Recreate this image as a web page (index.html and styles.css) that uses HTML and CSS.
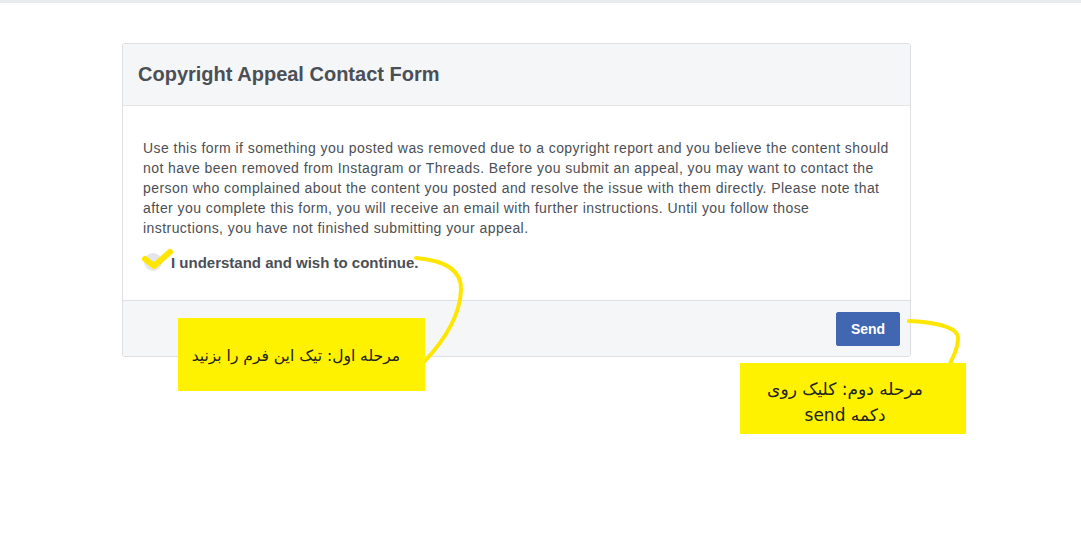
FILE: index.html
```html
<!DOCTYPE html>
<html lang="en">
<head>
<meta charset="utf-8">
<link rel="stylesheet" href="styles.css">
</head>
<body>
<div class="topbar"></div>
<main class="page">
  <section class="card">
    <header class="card-head"><h1>Copyright Appeal Contact Form</h1></header>
    <div class="card-body">
      <p>Use this form if something you posted was removed due to a copyright report and you believe the content should not have been removed from Instagram or Threads. Before you submit an appeal, you may want to contact the person who complained about the content you posted and resolve the issue with them directly. Please note that after you complete this form, you will receive an email with further instructions. Until you follow those instructions, you have not finished submitting your appeal.</p>
      <label class="check">
        <span class="box"></span>
        <span class="check-label">I understand and wish to continue.</span>
      </label>
    </div>
    <footer class="card-foot"><button class="send">Send</button></footer>
  </section>
</main>

<svg class="marks" width="1081" height="543" viewBox="0 0 1081 543">
  <path d="M145 259 L154 266 L170 252" fill="none" stroke="#ffe600" stroke-width="6" stroke-linecap="round" stroke-linejoin="round"/>
  <path d="M416 258 C440 260 462 268 461 290 C460 318 440 345 424 362" fill="none" stroke="#ffe600" stroke-width="4" stroke-linecap="round"/>
  <path d="M909 321 C930 322 958 326 958 338 C958 350 953 356 950 364" fill="none" stroke="#ffe600" stroke-width="4" stroke-linecap="round"/>
</svg>

<div class="note note-one" dir="rtl">مرحله اول: تیک این فرم را بزنید</div>
<div class="note note-two" dir="rtl">مرحله دوم: کلیک روی دکمه send</div>
</body>
</html>
```
FILE: styles.css
```css
html, body {
  margin: 0;
  padding: 0;
  background: #ffffff;
  font-family: "Liberation Sans", Arial, sans-serif;
}
.topbar {
  height: 3px;
  background: #e9eaed;
}
.page {
  padding: 40px 0 0 122px;
}
.card {
  width: 787px;
  border: 1px solid #dddfe2;
  border-radius: 3px;
  background: #fff;
  overflow: hidden;
}
.card-head {
  background: #f5f6f7;
  border-bottom: 1px solid #e5e5e5;
  height: 61px;
  display: flex;
  align-items: center;
  padding: 0 15px;
}
.card-head h1 {
  margin: 0;
  font-size: 20px;
  font-weight: bold;
  color: #4b4f56;
}
.card-body {
  padding: 32px 18px 29px 20px;
  border-bottom: 1px solid #dddfe2;
}
.card-body p {
  margin: 0;
  font-size: 14px;
  letter-spacing: 0.44px;
  line-height: 20px;
  color: #4b4f56;
}
.check {
  display: flex;
  align-items: center;
  gap: 9px;
  margin-top: 15px;
}
.box {
  width: 18px;
  height: 18px;
  border-radius: 50%;
  background: #e4e6eb;
  margin-left: 1px;
}
.check-label {
  font-size: 15px;
  font-weight: bold;
  color: #4b4f56;
}
.card-foot {
  background: #f5f6f7;
  height: 55px;
  display: flex;
  align-items: center;
  justify-content: flex-end;
  padding: 0 10px;
}
.send {
  background: #4267b2;
  border: 1px solid #4267b2;
  border-radius: 2px;
  color: #fff;
  font-family: "Liberation Sans", Arial, sans-serif;
  font-weight: bold;
  font-size: 14px;
  width: 64px;
  height: 34px;
}
.marks {
  position: absolute;
  left: 0;
  top: 0;
  pointer-events: none;
}
.note {
  position: absolute;
  background: #fff200;
  color: #222;
  font-family: "DejaVu Sans", "Noto Sans", sans-serif;
  box-sizing: border-box;
}
.note-one {
  left: 178px;
  top: 318px;
  width: 247px;
  height: 73px;
  padding: 27px 25px 0 0;
  font-size: 15.5px;
  line-height: 22px;
}
.note-two {
  left: 740px;
  top: 363px;
  width: 226px;
  height: 71px;
  padding: 13px 36px 0 20px;
  font-size: 17px;
  line-height: 26px;
  text-align: center;
}
```
